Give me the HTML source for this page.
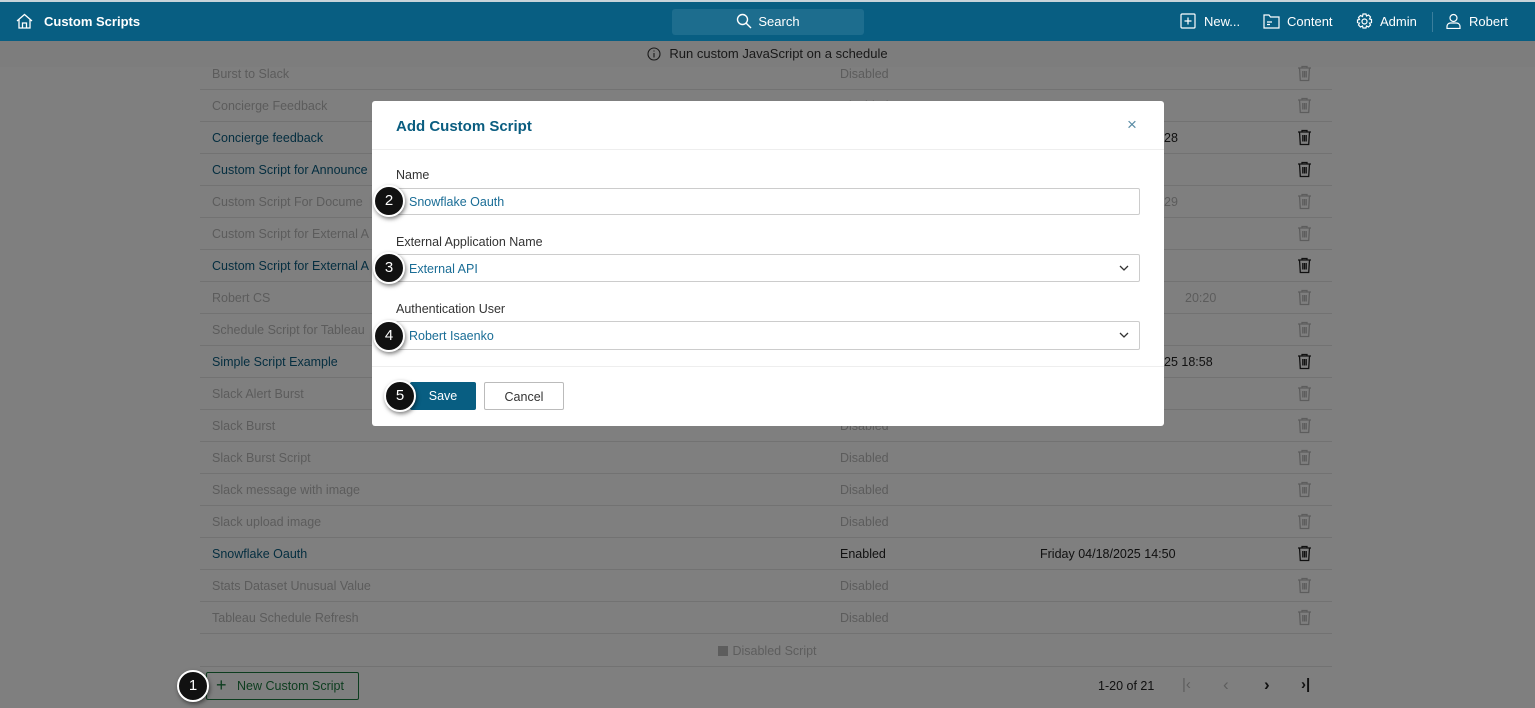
<!DOCTYPE html>
<html><head><meta charset="utf-8"><style>
*{box-sizing:border-box;margin:0;padding:0}
body{width:1535px;height:708px;overflow:hidden;background:#fff;font-family:"Liberation Sans",sans-serif;font-size:12.5px;position:relative}
.hdr{position:absolute;left:0;top:0;width:1535px;height:41px;background:#085e82;border-top:2px solid #c8d4da;color:#fff;z-index:20}
.hdr .t{position:absolute;left:44px;top:12px;font-weight:bold;font-size:13px}
.search{position:absolute;left:672px;top:7px;width:192px;height:26px;background:#1d6d8e;border-radius:3px;color:#fff;font-size:13px;text-align:center;line-height:26px}
.nav{position:absolute;top:12px;font-size:13px}
.info{position:absolute;top:41px;left:0;width:1535px;height:26px;background:#fafafa;text-align:center;line-height:26px;color:#333;font-size:13px}
.row{position:absolute;left:200px;width:1132px;height:32px;border-bottom:1px solid #e4e4e4;line-height:33px}
.row span{position:absolute}
.n{left:12px;color:#b8b8b8}.s{left:640px;color:#b8b8b8}.d{left:840px;color:#b8b8b8}
.row.e .n{color:#0a5d80}.row.e .s,.row.e .d{color:#222}
.tr{left:1098px;top:8px}
.ov{position:absolute;left:0;top:41px;width:1535px;height:667px;background:rgba(0,0,0,.5);z-index:10}
.modal{position:absolute;left:372px;top:101px;width:792px;height:325px;background:#fff;z-index:15;border-radius:3px}
.lbl{position:absolute;left:24px;color:#333;font-size:12.5px}
.inp{position:absolute;left:24px;width:744px;border:1px solid #ccc;border-radius:2px;color:#1a6d96;padding-left:12px;font-size:12.5px}
.badge{position:absolute;width:32px;height:32px;border-radius:50%;background:#111;border:2px solid #fff;color:#fff;font-size:15px;text-align:center;line-height:28px;box-shadow:1px 2px 4px rgba(0,0,0,.5);z-index:30}
</style></head><body>
<div class="hdr">
<svg style="position:absolute;left:16px;top:11px" width="17" height="16" viewBox="0 0 17 16" fill="none" stroke="#fff" stroke-width="1.3"><path d="M1 8L8.5 1.5 16 8M3 6.5V15h11V6.5M6.5 15v-5h4v5"/></svg>
<div class="t">Custom Scripts</div>
<div class="search"><svg style="vertical-align:-3px;margin-right:6px" width="16" height="16" viewBox="0 0 16 16" fill="none" stroke="#fff" stroke-width="1.4"><circle cx="6.5" cy="6.5" r="5"/><path d="M10.2 10.2L15 15"/></svg>Search</div>
<svg style="position:absolute;left:1180px;top:11px" width="16" height="16" viewBox="0 0 16 16" fill="none" stroke="#fff" stroke-width="1.2"><rect x="1" y="1" width="14" height="14" rx="1"/><path d="M8 4.5v7M4.5 8h7"/></svg>
<div class="nav" style="left:1204px">New...</div>
<svg style="position:absolute;left:1263px;top:11px" width="17" height="16" viewBox="0 0 17 16" fill="none" stroke="#fff" stroke-width="1.2"><path d="M1 2h5l1.5 2H16v11H1z M4 9h5M4 11.5h3"/></svg>
<div class="nav" style="left:1287px">Content</div>
<svg style="position:absolute;left:1356px;top:11px" width="17" height="17" viewBox="0 0 17 17" fill="none" stroke="#fff" stroke-width="1.2"><circle cx="8.5" cy="8.5" r="2.5"/><path d="M7 1h3l.5 2 2-1 2 2-1 2 2 .5v3l-2 .5 1 2-2 2-2-1-.5 2H7l-.5-2-2 1-2-2 1-2-2-.5V7l2-.5-1-2 2-2 2 1z"/></svg>
<div class="nav" style="left:1380px">Admin</div>
<div style="position:absolute;left:1432px;top:10px;width:1px;height:20px;background:#3a7e9c"></div>
<svg style="position:absolute;left:1446px;top:11px" width="15" height="16" viewBox="0 0 15 16" fill="none" stroke="#fff" stroke-width="1.2"><circle cx="7.5" cy="5" r="3.5"/><path d="M1 15.5v-2c0-2 1.5-3.5 3.5-3.5h6c2 0 3.5 1.5 3.5 3.5v2z"/></svg>
<div class="nav" style="left:1469px">Robert</div>
</div>
<div class="info"><svg style="vertical-align:-3px;margin-right:8px" width="14" height="14" viewBox="0 0 14 14" fill="none" stroke="#333" stroke-width="1.1"><circle cx="7" cy="7" r="6"/><path d="M7 6v4.5M7 3.5v1"/></svg>Run custom JavaScript on a schedule</div>

<div id="rows"></div>
<script>
var r=[["Burst to Slack",0,"",0],["Concierge Feedback",0,"",0],["Concierge feedback",1,"28",964],["Custom Script for Announce",1,"",0],["Custom Script For Docume",0,"29",964],["Custom Script for External A",0,"",0],["Custom Script for External A",1,"",0],["Robert CS",0,"20:20",985],["Schedule Script for Tableau",0,"",0],["Simple Script Example",1,"25 18:58",964],["Slack Alert Burst",0,"",0],["Slack Burst",0,"",0],["Slack Burst Script",0,"",0],["Slack message with image",0,"",0],["Slack upload image",0,"",0],["Snowflake Oauth",1,"Friday 04/18/2025 14:50",840],["Stats Dataset Unusual Value",0,"",0],["Tableau Schedule Refresh",0,"",0]];
var h="";r.forEach(function(x,i){var y=58+i*32;var c=x[1]?"#222":"#bbb";
h+='<div class="row'+(x[1]?' e':'')+'" style="top:'+y+'px"><span class="n">'+x[0]+'</span><span class="s">'+(x[1]?'Enabled':'Disabled')+'</span><span class="d" style="left:'+x[3]+'px">'+x[2]+'</span><svg class="tr" style="position:absolute;top:7px;left:1097px" width="15" height="17" viewBox="0 0 15 17" fill="none" stroke="'+c+'" stroke-width="1.3"><path d="M1 3h13M5 3V1.5h5V3M2.5 3l.8 12.5h8.4l.8-12.5M5.8 6v6.5M7.5 6v6.5M9.2 6v6.5"/></svg></div>';});
document.getElementById("rows").innerHTML=h;
</script>
<div style="position:absolute;top:644px;left:0;width:1535px;text-align:center;color:#bbb"><span style="display:inline-block;width:10px;height:10px;background:#bbb;margin-right:4px;vertical-align:-1px"></span>Disabled Script</div>
<div style="position:absolute;left:200px;top:666px;width:1132px;border-top:1px solid #e4e4e4"></div>
<div style="position:absolute;left:206px;top:672px;width:153px;height:28px;border:1px solid #1b7a3e;border-radius:2px;color:#1b7a3e;line-height:27px;padding-left:30px;font-size:12.5px">New Custom Script<span style="position:absolute;left:9px;top:-1px;font-size:18px">+</span></div>
<div style="position:absolute;left:1098px;top:679px;color:#222">1-20 of 21</div>
<div style="position:absolute;left:1182px;top:676px;color:#bbb;font-size:15px">|&lsaquo;</div>
<div style="position:absolute;left:1223px;top:675px;color:#bbb;font-size:17px">&lsaquo;</div>
<div style="position:absolute;left:1264px;top:675px;color:#222;font-size:17px;font-weight:bold">&rsaquo;</div>
<div style="position:absolute;left:1301px;top:676px;color:#222;font-size:15px;font-weight:bold">&rsaquo;|</div>

<div class="ov"></div>
<div class="modal">
<div style="position:absolute;left:24px;top:17px;font-size:15px;font-weight:bold;color:#0a5d80">Add Custom Script</div>
<div style="position:absolute;left:755px;top:14px;color:#5a8ca5;font-size:17px">×</div>
<div style="position:absolute;left:0;top:48px;width:792px;border-top:1px solid #eee"></div>
<div class="lbl" style="top:67px">Name</div>
<div class="inp" style="top:87px;height:27px;line-height:26px">Snowflake Oauth</div>
<div class="lbl" style="top:134px">External Application Name</div>
<div class="inp" style="top:153px;height:28px;line-height:28px">External API<svg style="position:absolute;right:10px;top:10px" width="10" height="7" viewBox="0 0 10 7" fill="none" stroke="#333" stroke-width="1.3"><path d="M1 1l4 4 4-4"/></svg></div>
<div class="lbl" style="top:201px">Authentication User</div>
<div class="inp" style="top:220px;height:29px;line-height:29px">Robert Isaenko<svg style="position:absolute;right:10px;top:10px" width="10" height="7" viewBox="0 0 10 7" fill="none" stroke="#333" stroke-width="1.3"><path d="M1 1l4 4 4-4"/></svg></div>
<div style="position:absolute;left:0;top:265px;width:792px;border-top:1px solid #eee"></div>
<div style="position:absolute;left:38px;top:281px;width:66px;height:28px;background:#085e82;border-radius:2px;color:#fff;line-height:29px;text-align:center">Save</div>
<div style="position:absolute;left:112px;top:281px;width:80px;height:28px;border:1px solid #bbb;border-radius:2px;color:#333;line-height:28px;text-align:center">Cancel</div>
</div>
<div class="badge" style="left:177px;top:670px">1</div>
<div class="badge" style="left:373px;top:185px">2</div>
<div class="badge" style="left:373px;top:252px">3</div>
<div class="badge" style="left:373px;top:320px">4</div>
<div class="badge" style="left:384px;top:380px">5</div>
</body></html>
